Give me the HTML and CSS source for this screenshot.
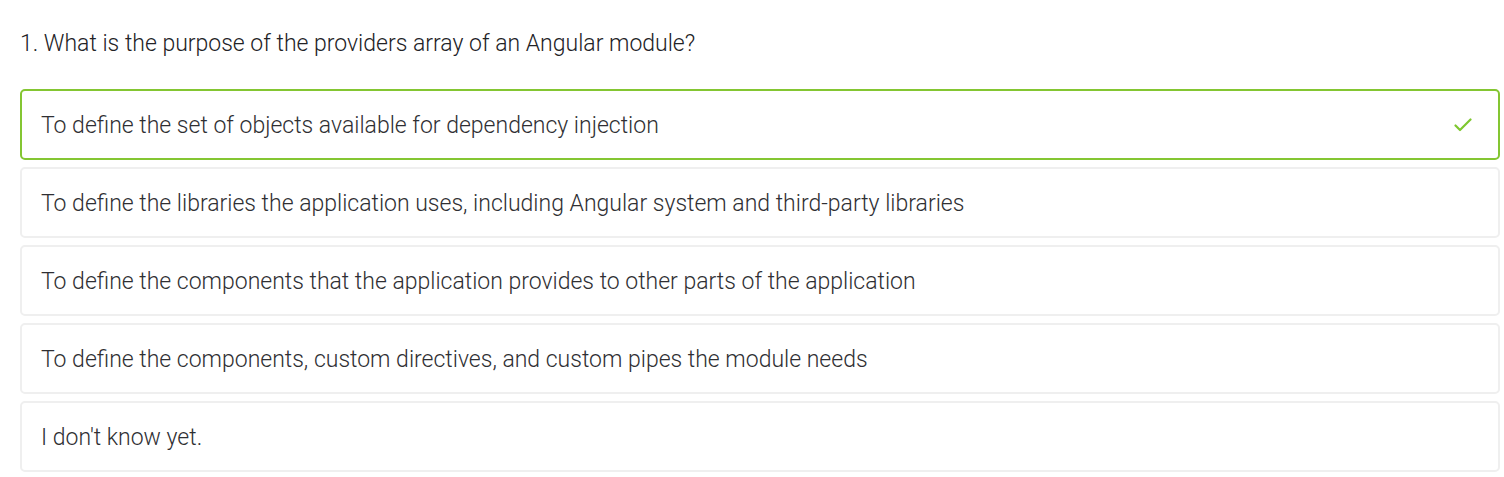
FILE: index.html
```html
<!DOCTYPE html>
<html lang="en">
<head>
<meta charset="utf-8">
<link rel="stylesheet" href="styles.css">
</head>
<body>
<div class="quiz">
  <div class="question">1. What is the purpose of the providers array of an Angular module?</div>
  <div class="options">
    <div class="option correct">
      <span class="label">To define the set of objects available for dependency injection</span>
      <svg class="check" width="18" height="14" viewBox="0 0 18 14"><path d="M1.5 7.5 L6 12 L16.5 1.5" fill="none" stroke="#7ec72f" stroke-width="2.2" stroke-linecap="round" stroke-linejoin="round"/></svg>
    </div>
    <div class="option"><span class="label">To define the libraries the application uses, including Angular system and third-party libraries</span></div>
    <div class="option"><span class="label">To define the components that the application provides to other parts of the application</span></div>
    <div class="option"><span class="label">To define the components, custom directives, and custom pipes the module needs</span></div>
    <div class="option"><span class="label">I don't know yet.</span></div>
  </div>
</div>
</body>
</html>
```
FILE: styles.css
```css
html, body {
  margin: 0;
  padding: 0;
  background: #ffffff;
}
body {
  font-family: Roboto, "Liberation Sans", sans-serif;
  font-weight: 300;
  color: #2f2f33;
}
.quiz {
  padding: 28px 4px 0 20px;
}
.question {
  font-size: 23px;
  line-height: 32px;
  color: #222226;
  margin-bottom: 29px;
}
.options {
  display: flex;
  flex-direction: column;
  gap: 7px;
}
.option {
  display: flex;
  align-items: center;
  justify-content: space-between;
  height: 71px;
  box-sizing: border-box;
  border: 2px solid #efefef;
  border-radius: 5px;
  padding: 0 26px 0 19px;
  font-size: 23px;
}
.label {
  padding-top: 2px;
}
.option.correct {
  border-color: #84c632;
}
.check {
  display: block;
}
```
